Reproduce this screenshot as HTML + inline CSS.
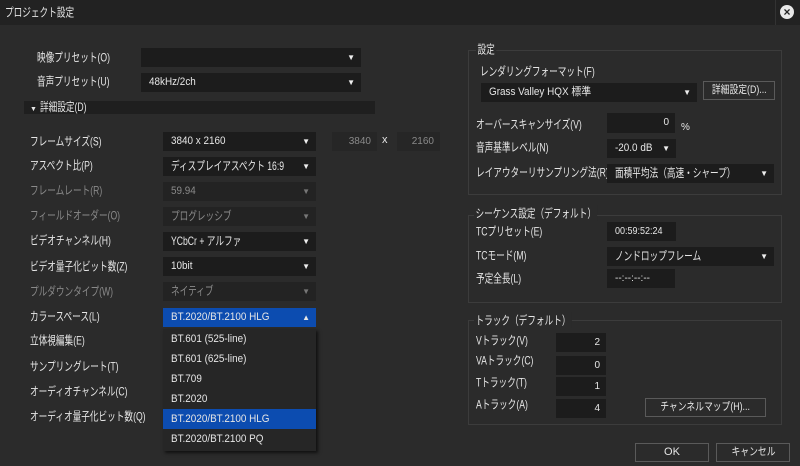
<!DOCTYPE html>
<html><head><meta charset="utf-8"><style>
*{margin:0;padding:0;box-sizing:border-box}
body{width:800px;height:466px;background:#2b2b2b;font-family:"Liberation Sans","Noto Sans CJK JP",sans-serif;font-size:11px;color:#e6e6e6;position:relative;overflow:hidden}
.a{position:absolute;white-space:nowrap}
.l{position:absolute;white-space:nowrap;font-size:12px;transform:translateY(-50%) scaleX(.72);transform-origin:left center}
.dim{color:#8a8a8a}
.in{position:absolute;background:#1c1c1c;padding-left:8px;line-height:19px;height:19px;white-space:nowrap}
.in.r{text-align:right;padding-right:6px;padding-left:0;font-size:10px}
.cb::after{content:"▼";position:absolute;right:6px;top:0;font-size:8px;color:#eee}
.cb.dim::after{color:#777}
.box{position:absolute;border:1px solid #3c3c3c}
.btn{position:absolute;border:1px solid #5a5a5a;background:#2b2b2b;text-align:center;line-height:17px;white-space:nowrap}
.t{display:inline-block;font-size:12px;transform:scaleX(.72);transform-origin:left center}
.u{display:inline-block;transform:scaleX(.9);transform-origin:left center}
.c{display:inline-block;transform:scaleX(.8)}
.dd div{height:20px;line-height:20px;padding-left:8px}
</style></head><body>
<div class="a" style="left:0;top:0;width:800px;height:25px;background:#222"></div>
<div class="a" style="left:775px;top:0;width:1px;height:25px;background:#333"></div>
<div class="l" style="left:5px;top:12px">プロジェクト設定</div>
<div class="a" style="left:780px;top:5px;width:14px;height:14px;border-radius:50%;background:#e8e8e8;color:#222;font-size:12px;font-weight:bold;line-height:14px;text-align:center">×</div>

<div class="l" style="left:37px;top:57px">映像プリセット(O)</div>
<div class="in cb" style="left:141px;top:48px;width:220px"></div>
<div class="l" style="left:37px;top:81px">音声プリセット(U)</div>
<div class="in cb" style="left:141px;top:73px;width:220px"><span class="u">48kHz/2ch</span></div>
<div class="a" style="left:24px;top:101px;width:351px;height:13px;background:#1f1f1f;line-height:13px;padding-left:6px"><span style="font-size:7px">▼</span> <span class="t">詳細設定(D)</span></div>

<div class="l" style="left:30px;top:141px">フレームサイズ(S)</div>
<div class="in cb" style="left:163px;top:132px;width:153px"><span class="u">3840 x 2160</span></div>
<div class="in r dim" style="left:332px;top:132px;width:45px;background:#262626">3840</div>
<div class="a" style="left:382px;top:134px">x</div>
<div class="in r dim" style="left:397px;top:132px;width:43px;background:#262626">2160</div>
<div class="l" style="left:30px;top:165px">アスペクト比(P)</div>
<div class="in cb" style="left:163px;top:157px;width:153px"><span class="t">ディスプレイアスペクト 16:9</span></div>
<div class="l dim" style="left:30px;top:190px">フレームレート(R)</div>
<div class="in cb dim" style="left:163px;top:182px;width:153px;background:#232323"><span class="u">59.94</span></div>
<div class="l dim" style="left:30px;top:215px">フィールドオーダー(O)</div>
<div class="in cb dim" style="left:163px;top:207px;width:153px;background:#232323"><span class="t">プログレッシブ</span></div>
<div class="l" style="left:30px;top:240px">ビデオチャンネル(H)</div>
<div class="in cb" style="left:163px;top:232px;width:153px"><span class="t">YCbCr + アルファ</span></div>
<div class="l" style="left:30px;top:266px">ビデオ量子化ビット数(Z)</div>
<div class="in cb" style="left:163px;top:257px;width:153px"><span class="u">10bit</span></div>
<div class="l dim" style="left:30px;top:291px">プルダウンタイプ(W)</div>
<div class="in cb dim" style="left:163px;top:282px;width:153px;background:#232323"><span class="t">ネイティブ</span></div>
<div class="l" style="left:30px;top:316px">カラースペース(L)</div>
<div class="in" style="left:163px;top:308px;width:153px;background:#0c4cb0"><span class="u">BT.2020/BT.2100 HLG</span><span style="position:absolute;right:6px;font-size:8px">▲</span></div>
<div class="l" style="left:30px;top:340px">立体視編集(E)</div>
<div class="l" style="left:30px;top:366px">サンプリングレート(T)</div>
<div class="l" style="left:30px;top:391px">オーディオチャンネル(C)</div>
<div class="l" style="left:30px;top:416px">オーディオ量子化ビット数(Q)</div>

<div class="a dd" style="left:163px;top:329px;width:153px;height:122px;background:#262626;box-shadow:2px 2px 3px #111">
<div><span class="u">BT.601 (525-line)</span></div>
<div><span class="u">BT.601 (625-line)</span></div>
<div><span class="u">BT.709</span></div>
<div><span class="u">BT.2020</span></div>
<div style="background:#0c4cb0"><span class="u">BT.2020/BT.2100 HLG</span></div>
<div><span class="u">BT.2020/BT.2100 PQ</span></div>
</div>

<div class="box" style="left:468px;top:50px;width:314px;height:145px"></div>
<div class="l" style="left:476px;top:49px;background:#2b2b2b;padding:0 2px">設定</div>
<div class="l" style="left:480px;top:71px">レンダリングフォーマット(F)</div>
<div class="in cb" style="left:481px;top:83px;width:216px"><span class="u">Grass Valley HQX 標準</span></div>
<div class="btn" style="left:703px;top:81px;width:72px;height:19px"><span class="c">詳細設定(D)...</span></div>
<div class="l" style="left:476px;top:124px">オーバースキャンサイズ(V)</div>
<div class="in r" style="left:607px;top:113px;width:68px;height:20px">0</div>
<div class="a" style="left:681px;top:122px;font-size:10px">%</div>
<div class="l" style="left:476px;top:147px">音声基準レベル(N)</div>
<div class="in cb" style="left:607px;top:139px;width:69px"><span class="u">-20.0 dB</span></div>
<div class="l" style="left:476px;top:172px">レイアウターリサンプリング法(R)</div>
<div class="in cb" style="left:607px;top:164px;width:167px"><span class="t">面積平均法（高速・シャープ）</span></div>

<div class="box" style="left:468px;top:215px;width:314px;height:88px"></div>
<div class="l" style="left:474px;top:213px;background:#2b2b2b;padding:0 2px">シーケンス設定（デフォルト）</div>
<div class="l" style="left:476px;top:231px">TCプリセット(E)</div>
<div class="in" style="left:607px;top:222px;width:69px"><span class="u" style="font-size:10px">00:59:52:24</span></div>
<div class="l" style="left:476px;top:255px">TCモード(M)</div>
<div class="in cb" style="left:607px;top:247px;width:167px"><span class="t">ノンドロップフレーム</span></div>
<div class="l" style="left:476px;top:278px">予定全長(L)</div>
<div class="in" style="left:607px;top:269px;width:68px;font-size:10px">--:--:--:--</div>

<div class="box" style="left:468px;top:320px;width:314px;height:105px"></div>
<div class="l" style="left:474px;top:320px;background:#2b2b2b;padding:0 2px">トラック（デフォルト）</div>
<div class="l" style="left:476px;top:340px">Vトラック(V)</div>
<div class="in r" style="left:556px;top:333px;width:50px">2</div>
<div class="l" style="left:476px;top:360px">VAトラック(C)</div>
<div class="in r" style="left:556px;top:356px;width:50px">0</div>
<div class="l" style="left:476px;top:382px">Tトラック(T)</div>
<div class="in r" style="left:556px;top:377px;width:50px">1</div>
<div class="l" style="left:476px;top:404px">Aトラック(A)</div>
<div class="in r" style="left:556px;top:399px;width:50px">4</div>
<div class="btn" style="left:645px;top:398px;width:121px;height:19px"><span class="c">チャンネルマップ(H)...</span></div>

<div class="btn" style="left:635px;top:443px;width:74px;height:19px">OK</div>
<div class="btn" style="left:716px;top:443px;width:74px;height:19px"><span class="c">キャンセル</span></div>
</body></html>
